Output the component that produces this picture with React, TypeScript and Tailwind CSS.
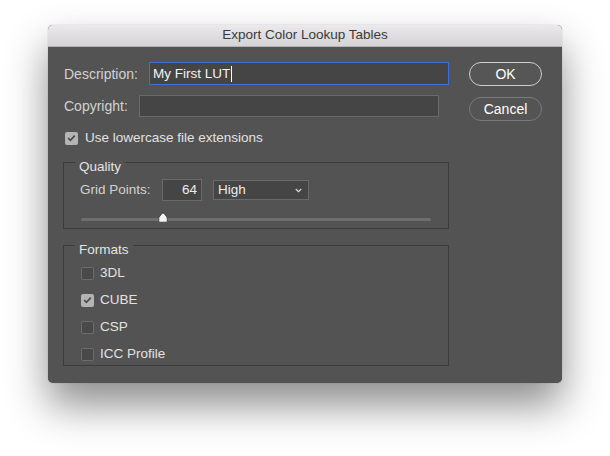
import React from 'react';

const font = { fontFamily: '"Liberation Sans", Arial, sans-serif' };

const Checkbox = ({ checked }: { checked?: boolean }) =>
  checked ? (
    <span className="flex h-[13px] w-[13px] shrink-0 items-center justify-center rounded-[2px] bg-[#b4b4b4]">
      <svg width="9" height="8" viewBox="0 0 9 8">
        <path d="M1.2 4.2 L3.4 6.3 L7.8 1.6" fill="none" stroke="#4b4b4b" strokeWidth="1.7" />
      </svg>
    </span>
  ) : (
    <span className="h-[13px] w-[13px] shrink-0 rounded-[2px] border border-[#6c6c6c] bg-[#494949]" />
  );

const FormatRow = ({ label, checked }: { label: string; checked?: boolean }) => (
  <div className="flex h-[16px] items-center gap-[6px] pl-px">
    <Checkbox checked={checked} />
    <span className="text-[13.5px] text-[#e2e2e2]">{label}</span>
  </div>
);

const App: React.FC = () => {
  return (
    <div className="h-[456px] w-[610px] bg-white pl-[48px] pt-[25px]" style={font}>
      <div className="flex h-[358px] w-[514px] flex-col overflow-hidden rounded-[5px] bg-[#535353] shadow-[0_22px_42px_rgba(0,0,0,0.45),0_0_1px_rgba(0,0,0,0.4)]">
        {/* title bar */}
        <div className="flex h-[22px] shrink-0 items-center justify-center border-b border-[#b3b3b3] bg-gradient-to-b from-[#ebe9eb] to-[#d5d3d5]">
          <span className="text-[13.5px] text-[#3a3a3a]">Export Color Lookup Tables</span>
        </div>

        <div className="flex flex-1 pl-[15px] pt-[15px]">
          {/* left column */}
          <div className="flex w-[386px] flex-col">
            <div className="flex h-[23px] items-center">
              <span className="w-[86px] pl-px pt-px text-[14px] text-[#d2d2d2]">Description:</span>
              <div className="flex h-[23px] w-[300px] items-center border border-[#3f6fd6] bg-[#454545] pl-[3px] pt-px">
                <span className="text-[13.5px] text-[#f2f2f2]">My First LUT</span>
                <span className="ml-px h-[16px] w-px bg-white" />
              </div>
            </div>

            <div className="mt-[10px] flex h-[22px] items-center">
              <span className="w-[76px] pl-px pt-px text-[14px] text-[#d2d2d2]">Copyright:</span>
              <div className="h-[22px] w-[300px] border border-[#6a6a6a] bg-[#454545]" />
            </div>

            <div className="mt-[13px] flex h-[16px] items-center gap-[7px] pl-[2px]">
              <Checkbox checked />
              <span className="text-[13.5px] text-[#e2e2e2]">Use lowercase file extensions</span>
            </div>

            <fieldset className="mt-[3px] border border-[#3c3c3c] pb-[4px] pl-[16px] pr-[16px] pt-[4px]">
              <legend className="-ml-[5px] px-[4px] pt-[10px] text-[13.5px] leading-[16px] text-[#e4e4e4]">Quality</legend>
              <div className="flex h-[22px] items-center">
                <span className="w-[82px] pt-px text-[13.5px] text-[#d2d2d2]">Grid Points:</span>
                <div className="flex h-[22px] w-[40px] items-center justify-end border border-[#6a6a6a] bg-[#454545] pr-[4px]">
                  <span className="text-[13.5px] text-[#ececec]">64</span>
                </div>
                <div className="ml-[11px] flex h-[20px] w-[96px] items-center justify-between border border-[#6a6a6a] bg-[#454545] pl-[4px] pr-[6px]">
                  <span className="text-[13.5px] text-[#ececec]">High</span>
                  <svg width="7" height="5" viewBox="0 0 7 5">
                    <path d="M0.8 1 L3.5 3.6 L6.2 1" fill="none" stroke="#dcdcdc" strokeWidth="1.2" />
                  </svg>
                </div>
              </div>
              <div className="relative mt-[11px] flex h-[12px] items-end">
                <div className="mb-[3px] ml-px h-[3px] w-[350px] rounded-full bg-[#6e6e6e]" />
                <svg className="absolute left-[78px] top-0" width="10" height="11" viewBox="0 0 10 11">
                  <path
                    d="M0.8 10.2 V6.2 Q0.8 5 2 4 L4 1.4 Q5 0.4 6 1.4 L8 4 Q9.2 5 9.2 6.2 V10.2 Z"
                    fill="#f4f4f4"
                    stroke="#3a3a3a"
                    strokeWidth="0.8"
                  />
                </svg>
              </div>
            </fieldset>

            <fieldset className="mt-[3px] border border-[#3c3c3c] pb-[3px] pl-[16px] pr-[16px] pt-[7px]">
              <legend className="-ml-[5px] px-[4px] pt-[10px] text-[13.5px] leading-[16px] text-[#e4e4e4]">Formats</legend>
              <div className="flex flex-col gap-[11px]">
                <FormatRow label="3DL" />
                <FormatRow label="CUBE" checked />
                <FormatRow label="CSP" />
                <FormatRow label="ICC Profile" />
              </div>
            </fieldset>
          </div>

          {/* buttons */}
          <div className="ml-[20px] flex flex-col">
            <button className="flex h-[24px] w-[73px] items-center justify-center rounded-full border border-[#cfcfcf] bg-[#565656] text-[14px] text-white">
              OK
            </button>
            <button className="mt-[11px] flex h-[24px] w-[73px] items-center justify-center rounded-full border border-[#7a7a7a] bg-[#545454] text-[14px] text-white">
              Cancel
            </button>
          </div>
        </div>
      </div>
    </div>
  );
};

export default App;
